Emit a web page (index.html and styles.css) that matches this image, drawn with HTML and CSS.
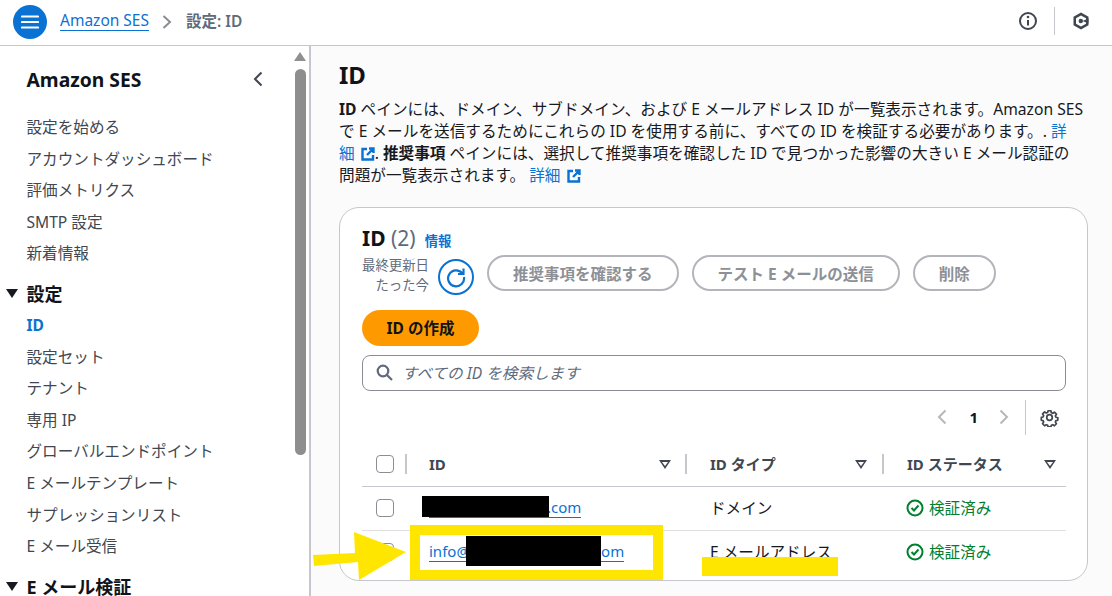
FILE: index.html
```html
<!DOCTYPE html>
<html lang="ja">
<head>
<meta charset="utf-8">
<title>Amazon SES</title>
<link rel="stylesheet" href="styles.css">
</head>
<body>
<header class="topbar">
  <button class="menu-btn" aria-label="menu">
    <svg width="18" height="14" viewBox="0 0 18 14"><path d="M1 1.5h16M1 7h16M1 12.5h16" stroke="#fff" stroke-width="2.2" stroke-linecap="round"/></svg>
  </button>
  <a class="crumb-link">Amazon SES</a>
  <svg class="crumb-sep" width="10" height="14" viewBox="0 0 10 14"><path d="M1.5 1l6.5 6-6.5 6" fill="none" stroke="#8a8d90" stroke-width="2"/></svg>
  <span class="crumb-current">設定: ID</span>
  <div class="top-tools">
    <svg width="20" height="20" viewBox="0 0 20 20"><circle cx="10" cy="10" r="8" fill="none" stroke="#414750" stroke-width="2"/><path d="M10 9v5.500" stroke="#414750" stroke-width="2"/><circle cx="10" cy="6" r="1.300" fill="#414750"/></svg>
    <span class="tool-sep"></span>
    <svg width="20" height="20" viewBox="0 0 20 20"><path d="M10 1.500l7.500 4.300v8.400L10 18.500l-7.500-4.300V5.800z" fill="#414750"/><path d="M15 7.300L10 4.400 5 7.300v5.400l5 2.900 5-2.900z" fill="#fff"/><path d="M17.500 7.600l-6 2.400 6 2.400z" fill="#414750"/><circle cx="9.800" cy="10" r="2.200" fill="#414750"/></svg>
  </div>
</header>
<div class="shell">
  <nav class="sidebar">
    <div class="side-head">
      <span class="side-title">Amazon SES</span>
      <svg width="12" height="16" viewBox="0 0 12 16"><path d="M9.500 1.500L3 8l6.500 6.500" fill="none" stroke="#414750" stroke-width="2"/></svg>
    </div>
    <ul class="side-list">
      <li>設定を始める</li>
      <li>アカウントダッシュボード</li>
      <li>評価メトリクス</li>
      <li>SMTP 設定</li>
      <li>新着情報</li>
    </ul>
    <div class="side-section"><span class="tri"></span>設定</div>
    <ul class="side-list tight">
      <li class="active">ID</li>
      <li>設定セット</li>
      <li>テナント</li>
      <li>専用 IP</li>
      <li>グローバルエンドポイント</li>
      <li>E メールテンプレート</li>
      <li>サプレッションリスト</li>
      <li>E メール受信</li>
    </ul>
    <div class="side-section"><span class="tri"></span>E メール検証</div>
    <div class="scroll-arrow"></div>
    <div class="scroll-thumb"></div>
  </nav>
  <main class="content">
    <h1 class="page-title">ID</h1>
    <p class="intro"><b>ID</b> ペインには、ドメイン、サブドメイン、および E メールアドレス ID が一覧表示されます。Amazon SES で E メールを送信するためにこれらの ID を使用する前に、すべての ID を検証する必要があります。. <a>詳<br>細<svg class="ext" width="14" height="14" viewBox="0 0 14 14"><path d="M6 2H1.500v10.500H12V8M8 1.500h4.500V6M12.500 1.500L6 8" fill="none" stroke="#0972d3" stroke-width="2.400"/></svg></a>. <b>推奨事項</b> ペインには、選択して推奨事項を確認した ID で見つかった影響の大きい E メール認証の問題が一覧表示されます。 <a>詳細<svg class="ext" width="14" height="14" viewBox="0 0 14 14"><path d="M6 2H1.500v10.500H12V8M8 1.500h4.500V6M12.500 1.500L6 8" fill="none" stroke="#0972d3" stroke-width="2.400"/></svg></a></p>
    <section class="card">
      <div class="card-title"><h2>ID <span class="count">(2)</span></h2><a class="info">情報</a></div>
      <div class="actions">
        <div class="updated">最終更新日<br>たった今</div>
        <button class="refresh" aria-label="refresh">
          <svg width="22" height="22" viewBox="0 0 22 22"><path d="M17.500 7.500A8 8 0 1 0 19 11" fill="none" stroke="#0972d3" stroke-width="2.200"/><path d="M18.500 2.500v5.500H13" fill="none" stroke="#0972d3" stroke-width="2.200"/></svg>
        </button>
        <button class="pill disabled">推奨事項を確認する</button>
        <button class="pill disabled">テスト E メールの送信</button>
        <button class="pill disabled">削除</button>
      </div>
      <button class="pill primary">ID の作成</button>
      <div class="search">
        <svg width="17" height="17" viewBox="0 0 17 17"><circle cx="7" cy="7" r="5.300" fill="none" stroke="#5f6b7a" stroke-width="2.200"/><path d="M11 11l5 5" stroke="#5f6b7a" stroke-width="2.200"/></svg>
        <span>すべての ID を検索します</span>
      </div>
      <div class="pager">
        <svg width="12" height="16" viewBox="0 0 12 16"><path d="M9.500 1.500L3 8l6.500 6.500" fill="none" stroke="#b4b8bc" stroke-width="2"/></svg>
        <b>1</b>
        <svg width="12" height="16" viewBox="0 0 12 16"><path d="M2.500 1.500L9 8l-6.500 6.500" fill="none" stroke="#b4b8bc" stroke-width="2"/></svg>
        <span class="pager-sep"></span>
        <svg class="gear" width="19" height="19" viewBox="0 0 24 24"><path d="M10 2.500h4l.6 2.800 1.900.8 2.400-1.500 2.800 2.800-1.500 2.400.8 1.900 2.800.6v0l-.2 3.600-2.600.6-.8 1.900 1.500 2.400-2.800 2.800-2.400-1.500-1.900.8-.6 2.300h-4l-.6-2.300-1.900-.8-2.400 1.500-2.800-2.800 1.500-2.400-.8-1.900-2.500-.6v-4l2.500-.6.800-1.900-1.500-2.400 2.800-2.800 2.400 1.500 1.900-.8z" transform="translate(1.200 1.200) scale(.9)" fill="none" stroke="#414750" stroke-width="2.400" stroke-linejoin="round"/><circle cx="12" cy="12" r="3.500" fill="none" stroke="#414750" stroke-width="2.200"/></svg>
      </div>
      <div class="table">
        <div class="row head">
          <div class="cell check"><span class="box"></span><span class="col-sep"></span></div>
          <div class="cell id-col"><span>ID</span><span class="filter"></span><span class="col-sep"></span></div>
          <div class="cell type-col"><span>ID タイプ</span><span class="filter"></span><span class="col-sep"></span></div>
          <div class="cell status-col"><span>ID ステータス</span><span class="filter"></span></div>
        </div>
        <div class="row first">
          <div class="cell check"><span class="box"></span></div>
          <div class="cell id-col"><a class="id-link"><span class="gap-one"></span>.com</a></div>
          <div class="cell type-col">ドメイン</div>
          <div class="cell status-col ok"><svg width="18" height="18" viewBox="0 0 18 18"><circle cx="9" cy="9" r="7.500" fill="none" stroke="#00802f" stroke-width="2"/><path d="M5.500 9l2.500 2.500 4.500-5" fill="none" stroke="#00802f" stroke-width="2"/></svg>検証済み</div>
        </div>
        <div class="row last">
          <div class="cell check"><span class="box"></span></div>
          <div class="cell id-col"><a class="id-link">info@<span class="gap-two"></span>.com</a></div>
          <div class="cell type-col">E メールアドレス</div>
          <div class="cell status-col ok"><svg width="18" height="18" viewBox="0 0 18 18"><circle cx="9" cy="9" r="7.500" fill="none" stroke="#00802f" stroke-width="2"/><path d="M5.500 9l2.500 2.500 4.500-5" fill="none" stroke="#00802f" stroke-width="2"/></svg>検証済み</div>
        </div>
      </div>
    </section>
  </main>
</div>
<div class="redact r1"></div>
<div class="redact r2"></div>
<div class="mark-box"></div>
<div class="mark-line"></div>
<svg class="mark-arrow" width="94" height="50" viewBox="0 0 94 50"><path d="M0 24L42 22 41 1 93 21 46 49 45 31 1 35z" fill="#ffe600"/></svg>
</body>
</html>
```
FILE: styles.css
```css
* { box-sizing: border-box; }
html, body { margin: 0; height: 596px; overflow: hidden; }
body { font-family: "Noto Sans", "Noto Sans CJK JP", sans-serif; font-size: 15.600px; color: #16191f; background: #fff; position: relative; }
a { color: #0972d3; }
button { font-family: inherit; }
ul { list-style: none; margin: 0; padding: 0; }

.topbar { height: 46px; display: flex; align-items: center; padding: 0 21px 2px 13px; border-bottom: 1.500px solid #c6c6cd; background: #fff; }
.menu-btn { width: 34px; height: 34px; border: 0; border-radius: 50%; background: #0972d3; padding: 0; display: flex; align-items: center; justify-content: center; margin-right: 13px; }
.crumb-link { font-size: 15.500px; line-height: 20px; border-bottom: 1px solid #0972d3; color: #0972d3; margin-bottom: 2px; }
.crumb-sep { margin: 0 14px 0 13px; }
.crumb-current { font-size: 15.500px; font-weight: 600; color: #5f6b7a; margin-bottom: 3px; }
.top-tools { margin-left: auto; margin-bottom: 2px; display: flex; align-items: center; gap: 16px; }
.tool-sep { width: 1px; height: 28px; background: #c6c6cd; }

.shell { display: flex; height: 550px; }
.sidebar { width: 311px; flex: none; border-right: 2px solid #c6c6cd; padding: 19px 0 0 26.500px; position: relative; overflow: hidden; background: #fff; }
.side-head { display: flex; align-items: center; justify-content: space-between; width: 237.500px; height: 28px; margin-bottom: 19px; }
.side-title { font-size: 19.300px; font-weight: 700; color: #0f141a; }
.side-list li { height: 31.600px; line-height: 31.600px; color: #414750; white-space: nowrap; }
.side-list.tight li.active { color: #0972d3; font-weight: 700; }
.side-section { margin: 8px 0 0 -21px; height: 32px; line-height: 32px; font-size: 18px; font-weight: 700; color: #0f141a; display: flex; align-items: center; gap: 9px; white-space: nowrap; }
.tri { width: 0; height: 0; border-left: 6px solid transparent; border-right: 6px solid transparent; border-top: 9px solid #16191f; }
.scroll-arrow { position: absolute; right: 3px; top: 6px; width: 0; height: 0; border-left: 6px solid transparent; border-right: 6px solid transparent; border-bottom: 9px solid #909090; }
.scroll-thumb { position: absolute; right: 3px; top: 23px; width: 11px; height: 386px; border-radius: 6px; background: #8e8e8e; }

.content { flex: 1; background: #fbfbfb; padding: 11px 24px 0 28px; min-width: 0; }
.page-title { margin: 0; font-size: 24px; line-height: 36px; font-weight: 700; color: #0f141a; }
.intro { margin: 5px 0 0; font-size: 15.650px; line-height: 22.100px; width: 744px; }
.ext { margin-left: 6px; vertical-align: -2px; }

.card { margin-top: 21px; width: 749px; height: 374px; border: 1px solid #c6c6cd; border-radius: 20px; background: #fff; padding: 17px 21px 0 22px; }
.card-title { display: flex; align-items: baseline; gap: 9px; height: 28px; }
.card-title h2 { margin: 0; font-size: 21px; line-height: 26px; font-weight: 700; color: #0f141a; }
.count { font-weight: 400; color: #5f6b7a; }
.info { font-size: 13.300px; font-weight: 700; color: #0972d3; }
.actions { display: flex; align-items: center; height: 38px; margin-top: 1px; }
.updated { font-size: 13.400px; line-height: 20px; color: #5f6b7a; text-align: right; width: 67px; margin-top: 4px; white-space: nowrap; }
.refresh { width: 36px; height: 36px; margin: 8px 13px 0 9px; border: 2px solid #0972d3; border-radius: 50%; background: #fff; padding: 0; display: flex; align-items: center; justify-content: center; flex: none; }
.pill { height: 36px; border-radius: 18px; font-size: 15.500px; font-weight: 700; padding: 0 24px; background: #fff; white-space: nowrap; }
.disabled { border: 2px solid #b4b4bb; color: #8d9096; margin-right: 13px; }
.primary { display: block; margin-top: 18px; width: 117px; padding: 0 0 2px; border: 0; background: #ff9900; color: #0f141a; }
.search { display: flex; align-items: center; gap: 9px; margin-top: 9px; height: 36px; border: 1px solid #8c8c94; border-radius: 8px; padding: 0 13px 1px; font-style: italic; color: #5f6b7a; }
.pager { display: flex; align-items: center; justify-content: flex-end; height: 36px; margin-top: 8px; padding-right: 7px; color: #0f141a; }
.pager b { margin: 0 20px 0 21px; font-size: 15px; }
.pager-sep { width: 1px; height: 35px; background: #c6c6cd; margin: 0 14px 0 15px; }

.table { margin-top: 7px; width: 704px; }
.row { display: grid; grid-template-columns: 67px 281px 197px 159px; height: 44px; align-items: center; border-bottom: 1px solid #e0e0e4; }
.row.head { height: 45px; padding-bottom: 1px; border-bottom: 1.500px solid #c6c6cd; font-weight: 700; font-size: 15px; color: #414750; }
.row.first { height: 44px; padding-bottom: 2px; }
.row.last { height: 43px; padding-bottom: 2px; border-bottom: 0; }
.cell { display: flex; align-items: center; position: relative; height: 100%; white-space: nowrap; }
.check { padding-left: 14px; }
.box { width: 18px; height: 18px; border: 1.500px solid #8c8c94; border-radius: 4px; background: #fff; }
.col-sep { position: absolute; right: 0; top: 12px; width: 2px; height: 20px; background: #c6c6cd; }
.check .col-sep { right: 22px; }
.id-col .col-sep { right: 23px; }
.type-col .col-sep { right: 23px; }
.filter { position: absolute; top: 18px; width: 0; height: 0; border-left: 6px solid transparent; border-right: 6px solid transparent; border-top: 9px solid #414750; }
.filter::after { content: ""; position: absolute; left: -3px; top: -7.500px; width: 0; height: 0; border-left: 3px solid transparent; border-right: 3px solid transparent; border-top: 4.500px solid #fff; }
.id-col .filter { right: 39px; }
.type-col .filter { right: 40px; }
.status-col .filter { right: 10px; }
.id-link { display: inline-flex; align-items: center; color: #0972d3; font-size: 15px; line-height: 19px; border-bottom: 1px solid #0972d3; }
.gap-one { width: 118px; height: 19px; }
.gap-two { width: 120px; height: 19px; }
.ok { color: #00802f; gap: 5px; }
.ok svg { margin-left: -1px; }

.redact { position: absolute; background: #000; }
.r1 { left: 422px; top: 496px; width: 127px; height: 21px; }
.r2 { left: 466px; top: 536px; width: 135px; height: 30px; }
.mark-box { position: absolute; left: 410px; top: 525px; width: 253px; height: 55px; border: 10px solid #ffe600; }
.mark-line { position: absolute; left: 702px; top: 557px; width: 136px; height: 19px; background: #ffe600; }
.mark-arrow { position: absolute; left: 313px; top: 531px; }
```
